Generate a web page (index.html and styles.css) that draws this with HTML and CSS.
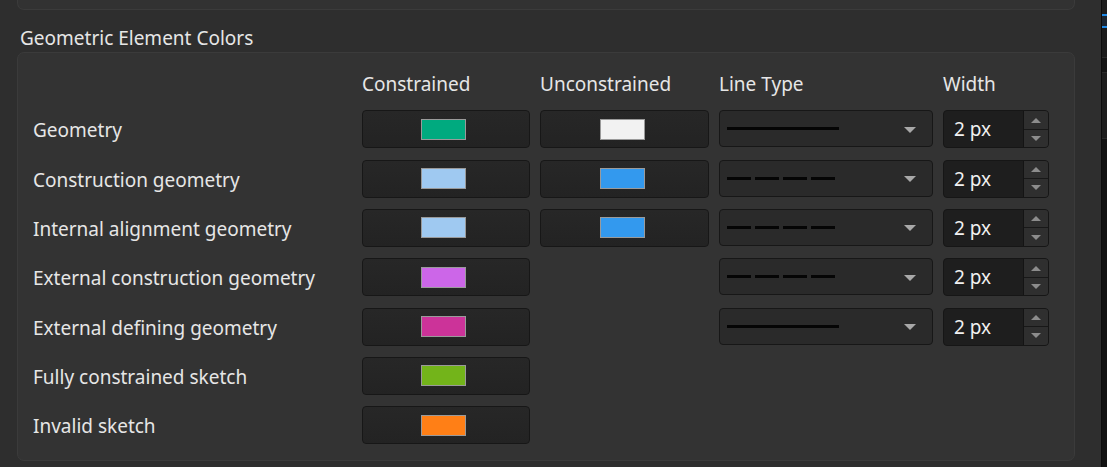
FILE: index.html
```html
<!DOCTYPE html>
<html>
<head>
<meta charset="utf-8">
<link rel="stylesheet" href="styles.css">
</head>
<body>
<div class="main">
  <div class="top-frame"></div>
  <div class="title">Geometric Element Colors</div>
  <div class="group">
    <div class="grid">
      <div class="hdr"></div>
      <div class="hdr">Constrained</div>
      <div class="hdr">Unconstrained</div>
      <div class="hdr">Line Type</div>
      <div class="hdr">Width</div>

      <div class="label">Geometry</div>
      <div class="cbtn"><span class="sw" style="background:#00aa7f"></span></div>
      <div class="cbtn"><span class="sw" style="background:#f2f2f2"></span></div>
      <div class="combo"><span class="line solid"></span><span class="arrow"></span></div>
      <div class="spin"><span class="val">2 px</span><span class="btns"><span class="up"></span><span class="dn"></span></span></div>

      <div class="label">Construction geometry</div>
      <div class="cbtn"><span class="sw" style="background:#9fc9f1"></span></div>
      <div class="cbtn"><span class="sw" style="background:#3399ee"></span></div>
      <div class="combo"><span class="line dashed"></span><span class="arrow"></span></div>
      <div class="spin"><span class="val">2 px</span><span class="btns"><span class="up"></span><span class="dn"></span></span></div>

      <div class="label">Internal alignment geometry</div>
      <div class="cbtn"><span class="sw" style="background:#9fc9f1"></span></div>
      <div class="cbtn"><span class="sw" style="background:#3399ee"></span></div>
      <div class="combo"><span class="line dashed"></span><span class="arrow"></span></div>
      <div class="spin"><span class="val">2 px</span><span class="btns"><span class="up"></span><span class="dn"></span></span></div>

      <div class="label">External construction geometry</div>
      <div class="cbtn"><span class="sw" style="background:#cc66e8"></span></div>
      <div class="empty"></div>
      <div class="combo"><span class="line dashed"></span><span class="arrow"></span></div>
      <div class="spin"><span class="val">2 px</span><span class="btns"><span class="up"></span><span class="dn"></span></span></div>

      <div class="label">External defining geometry</div>
      <div class="cbtn"><span class="sw" style="background:#cc3399"></span></div>
      <div class="empty"></div>
      <div class="combo"><span class="line solid"></span><span class="arrow"></span></div>
      <div class="spin"><span class="val">2 px</span><span class="btns"><span class="up"></span><span class="dn"></span></span></div>

      <div class="label">Fully constrained sketch</div>
      <div class="cbtn"><span class="sw" style="background:#73b41a"></span></div>
      <div class="empty"></div><div class="empty"></div><div class="empty"></div>

      <div class="label">Invalid sketch</div>
      <div class="cbtn"><span class="sw" style="background:#ff7f16"></span></div>
      <div class="empty"></div><div class="empty"></div><div class="empty"></div>
    </div>
  </div>
</div>
<div class="side">
  <div class="s1"></div>
  <div class="s2"></div>
  <div class="s3"></div>
  <div class="s4"></div>
  <div class="s5"></div>
</div>
</body>
</html>
```

FILE: styles.css
```css
html, body {
  margin: 0;
  padding: 0;
}
body {
  width: 1107px;
  height: 467px;
  overflow: hidden;
  background: #2e2e2e;
  display: flex;
  font-family: "Noto Sans", "Open Sans", sans-serif;
  color: #e6e6e6;
}
.main {
  width: 1101px;
  padding: 0 26px 0 17px;
  box-sizing: border-box;
  display: flex;
  flex-direction: column;
}
.top-frame {
  height: 9px;
  border: 1px solid #3b3b3b;
  border-top: none;
  border-radius: 0 0 7px 7px;
  background: #323232;
}
.title {
  margin-top: 16px;
  padding-left: 3px;
  font-size: 19px;
  line-height: 24px;
  height: 24px;
}
.group {
  margin-top: 2px;
  border: 1px solid #3b3b3b;
  border-radius: 7px;
  background: #333333;
  padding: 20px 0 16px 15px;
  height: 409px;
  box-sizing: border-box;
}
.grid {
  display: grid;
  grid-template-columns: 319px 168px 169px 214px 106px;
  grid-template-rows: 26px repeat(7, 38px);
  column-gap: 10px;
  row-gap: 11.33px;
}
.hdr {
  font-size: 19px;
  line-height: 22px;
  align-self: start;
  white-space: nowrap;
}
.label {
  font-size: 19px;
  line-height: 24px;
  align-self: center;
  padding-top: 2px;
  white-space: nowrap;
}
.cbtn {
  background: linear-gradient(#272727, #232323);
  border: 1px solid #171717;
  border-radius: 4px;
  display: flex;
  align-items: center;
  justify-content: center;
  box-sizing: border-box;
}
.sw {
  width: 45px;
  height: 21px;
  box-sizing: border-box;
  border: 1px solid #9a9a9a;
  margin-right: 5px;
}
.combo {
  background: #2a2a2a;
  border: 1px solid #171717;
  border-radius: 4px;
  box-sizing: border-box;
  height: 37px;
  display: flex;
  align-items: center;
  padding-left: 7px;
  padding-right: 16px;
  justify-content: space-between;
}
.line {
  display: block;
  width: 112px;
  height: 3px;
}
.line.solid {
  background: #050505;
}
.line.dashed {
  width: 111px;
  background: repeating-linear-gradient(90deg, #050505 0 24px, transparent 24px 28px);
}
.arrow {
  width: 0;
  height: 0;
  border-left: 6px solid transparent;
  border-right: 6px solid transparent;
  border-top: 6px solid #a8a8a8;
  margin-top: 2px;
}
.spin {
  background: #1e1e1e;
  border: 1px solid #161616;
  border-radius: 4px;
  box-sizing: border-box;
  height: 38px;
  display: flex;
  overflow: hidden;
}
.val {
  flex: 1;
  font-size: 19px;
  line-height: 36px;
  padding-left: 10px;
  color: #f0f0f0;
}
.btns {
  width: 24px;
  display: flex;
  flex-direction: column;
  border-left: 1px solid #141414;
}
.btns span {
  flex: 1;
  background: #2f2f2f;
  display: flex;
  align-items: center;
  justify-content: center;
}
.btns .up {
  border-bottom: 1px solid #181818;
}
.btns .up::after {
  content: "";
  border-left: 5px solid transparent;
  border-right: 5px solid transparent;
  border-bottom: 5px solid #8c8c8c;
}
.btns .dn::after {
  content: "";
  border-left: 5px solid transparent;
  border-right: 5px solid transparent;
  border-top: 5px solid #8c8c8c;
}
.side {
  width: 6px;
  background: #121212;
  border-left: 1px solid #0c0c0c;
  box-sizing: border-box;
  display: flex;
  flex-direction: column;
}
.s1 { height: 14px; background: #1d1d1d; }
.s2 { height: 14px; background: #1c2530; border-top: 2px solid #1e88e5; border-bottom: 2px solid #1e88e5; box-sizing: border-box; }
.s3 { height: 29px; background: #1b1b1b; }
.s4 { height: 14px; background: #141414; border-top: 1px solid #2a2a2a; }
.s5 { height: 65px; background: #1d1d1d; border-top: 1px solid #2a2a2a; border-bottom: 1px solid #2a2a2a; }
```
